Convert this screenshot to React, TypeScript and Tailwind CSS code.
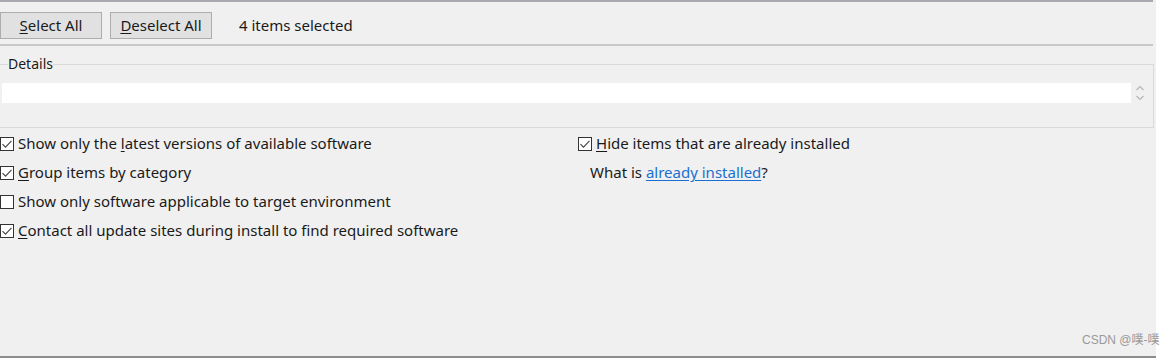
import React from 'react'

const FONT = { fontFamily: '"Noto Sans", "Noto Sans CJK SC", sans-serif' }

function Box({ checked }: { checked: boolean }) {
  return (
    <span className="w-[14px] h-[14px] border border-[#333] bg-white flex items-center justify-center shrink-0">
      {checked && (
        <svg width="12" height="12" viewBox="0 0 12 12">
          <path d="M1.5 6.2 L4.5 9.2 L10.5 2.8" fill="none" stroke="#444" strokeWidth="1.1" />
        </svg>
      )}
    </span>
  )
}

function Check({ checked, rest }: { checked: boolean; rest: React.ReactNode }) {
  return (
    <div className="flex items-center gap-[4px] h-[29px]">
      <Box checked={checked} />
      <span className="text-[15px] text-[#1a1a1a] leading-none">{rest}</span>
    </div>
  )
}

function Btn({ first, rest }: { first: string; rest: string }) {
  return (
    <button className="h-[27px] w-[102px] bg-[#e1e1e1] border border-[#adadad] text-[15px] text-[#1a1a1a] leading-none">
      <span className="underline underline-offset-2">{first}</span>{rest}
    </button>
  )
}

export default function App() {
  return (
    <div className="w-[1174px] h-[358px] bg-white flex" style={FONT}>
      <div className="w-[1156px] h-[358px] bg-[#f0f0f0] flex flex-col border-b-2 border-[#8c8c8c] relative">
        <div className="w-[1153px] border-t-2 border-[#a8a8b0]" />
        <div className="flex items-center h-[42px] pt-[9px] pb-[4px]">
          <Btn first="S" rest="elect All" />
          <div className="ml-[8px]"><Btn first="D" rest="eselect All" /></div>
          <span className="ml-[27px] text-[15px] text-[#1a1a1a]">4 items selected</span>
        </div>
        <div className="w-[1153px] border-t-2 border-[#c8c8c8]" />

        <div className="mt-[9px] w-[1154px] h-[73px] relative">
          <div className="absolute left-0 right-0 top-[9px] bottom-0 border-t border-r border-b border-[#d9d9d9]" />
          <span className="absolute left-[8px] top-0 bg-[#f0f0f0] text-[14px] text-[#1a1a1a] leading-[18px]">Details</span>
          <div className="absolute left-[2px] top-[28px] w-[1129px] h-[20px] bg-white" />
          <svg className="absolute left-[1134px] top-[29px]" width="12" height="18" viewBox="0 0 12 18">
            <path d="M2.5 6 L6 2.5 L9.5 6" fill="none" stroke="#b5b5b5" strokeWidth="1.2" />
            <path d="M2.5 12 L6 15.5 L9.5 12" fill="none" stroke="#b5b5b5" strokeWidth="1.2" />
          </svg>
        </div>

        <div className="flex mt-[1px]">
          <div className="w-[578px] flex flex-col">
            <Check checked rest={<>Show only the <span className="underline underline-offset-2">l</span>atest versions of available software</>} />
            <Check checked rest={<><span className="underline underline-offset-2">G</span>roup items by category</>} />
            <Check checked={false} rest="Show only software applicable to target environment" />
            <Check checked rest={<><span className="underline underline-offset-2">C</span>ontact all update sites during install to find required software</>} />
          </div>
          <div className="flex flex-col">
            <Check checked rest={<><span className="underline underline-offset-2">H</span>ide items that are already installed</>} />
            <div className="h-[29px] flex items-center pl-[12px] text-[15px] text-[#1a1a1a] leading-none">
              What is&nbsp;<span className="text-[#1a6fd0] underline underline-offset-2">already installed</span>?
            </div>
          </div>
        </div>

        <span className="absolute left-[1082px] bottom-[7px] whitespace-nowrap text-[12px] text-[#9a9a9a]" style={{ fontFamily: '"Liberation Sans", "Noto Sans CJK SC", sans-serif' }}>CSDN @噗-噗</span>
      </div>
    </div>
  )
}
